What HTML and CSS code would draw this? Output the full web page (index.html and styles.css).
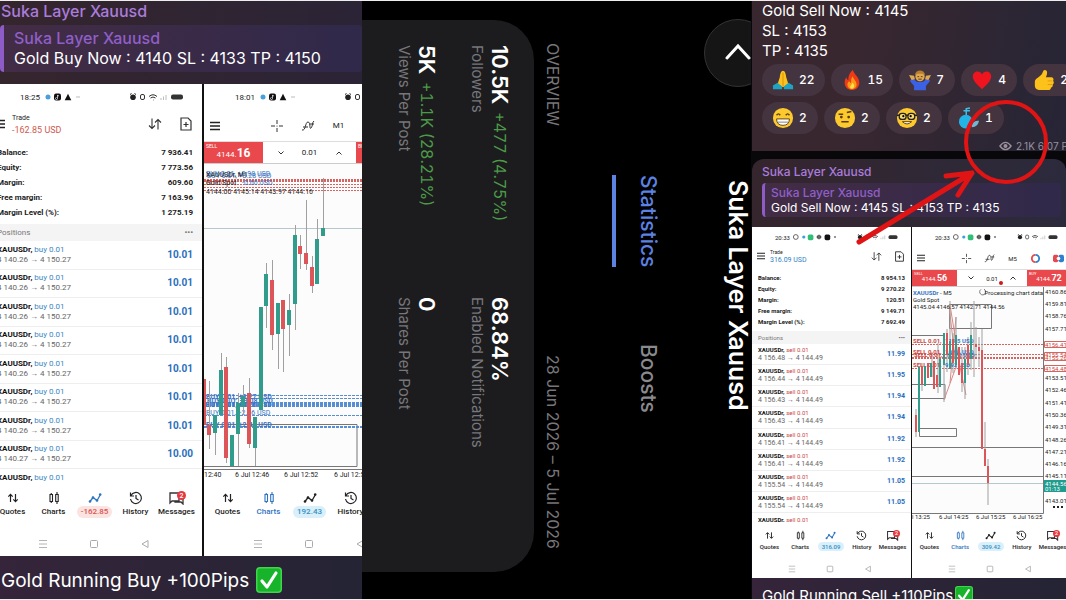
FILE: index.html
```html
<!DOCTYPE html>
<html lang="en">
<head>
    <meta charset="utf-8">
    <meta name="viewport" content="width=device-width, initial-scale=1">
    <title>Suka Layer Xauusd</title>
    <link rel="stylesheet" href="styles.css">
</head>
<body>
<svg class="defs" width="0" height="0" aria-hidden="true">
    <symbol id="menu" viewBox="0 0 10 10"><path d="M0 1.5h10M0 5h10M0 8.5h10" stroke="#222" stroke-width="1.4"/></symbol>
    <symbol id="sort" viewBox="0 0 14 14"><path d="M4 1.5v10M1 8.5l3 3 3-3M10 12.500v-10M7 5.500l3-3 3 3" fill="none" stroke="#333" stroke-width="1.100"/></symbol>
    <symbol id="newdoc" viewBox="0 0 12 14"><path d="M1 1h7l3 3v9H1zM6 5v5M3.500 7.500h5" fill="none" stroke="#333" stroke-width="1.200"/></symbol>
    <symbol id="cross" viewBox="0 0 14 14"><path d="M7 1v4M7 9v4M1 7h4M9 7h4" stroke="#333" stroke-width="1"/><circle cx="7" cy="7" r=".6" fill="#333"/></symbol>
    <symbol id="indi" viewBox="0 0 14 14"><path d="M1 11c4 1 3-8 6-8s1 8 3 6 1-6 3-7M2 8h5M9 5h4" fill="none" stroke="#333" stroke-width="1"/></symbol>
    <symbol id="down" viewBox="0 0 8 8"><path d="M1.500 2.500l2.500 2.500 2.500-2.500" fill="none" stroke="#333"/></symbol>
    <symbol id="up" viewBox="0 0 8 8"><path d="M1.500 5.500l2.500-2.500 2.500 2.500" fill="none" stroke="#333"/></symbol>
    <symbol id="t-quotes" viewBox="0 0 14 14"><path d="M4.500 11V3.500M2.300 5.600l2.200-2.200 2.200 2.200M9.500 3v7.500M7.300 8.400l2.200 2.200 2.200-2.200" fill="none" stroke="currentColor" stroke-width="1.200"/></symbol>
    <symbol id="t-charts" viewBox="0 0 14 14"><path d="M3 3.500h2.500v7H3zM8.700 3.500h2.500v7H8.700zM4.250 2v1.500M4.250 10.500v1.500M10 1v2.500M10 10.500v2.500" fill="none" stroke="currentColor" stroke-width="1.100"/></symbol>
    <symbol id="t-trade" viewBox="0 0 14 14"><path d="M2 10.500l3-4 4 3 3.500-6" fill="none" stroke="currentColor" stroke-width="1.300"/><g fill="currentColor"><circle cx="2" cy="10.500" r="1.300"/><circle cx="5" cy="6.500" r="1.300"/><circle cx="9" cy="9.500" r="1.300"/><circle cx="12.200" cy="3.500" r="1.300"/></g></symbol>
    <symbol id="t-history" viewBox="0 0 14 14"><path d="M2 4.500A5.500 5.500 0 1 1 1.500 8M1.500 1.500v3.500H5M7 4v3.500l2.500 1.500" fill="none" stroke="currentColor" stroke-width="1.200"/></symbol>
    <symbol id="t-msg" viewBox="0 0 18 14"><path d="M2 2h9v8H4l-2 2zM13 5h2v8l-2-2H7v-1" fill="none" stroke="#333" stroke-width="1.300"/><circle cx="13.500" cy="4.500" r="4.500" fill="#e5383f"/><text x="13.500" y="7" font-size="7" text-anchor="middle" fill="#fff" font-family="Roboto, sans-serif">2</text></symbol>
    <symbol id="n-menu" viewBox="0 0 10 10"><path d="M1 1.500h8M1 5h8M1 8.500h8" stroke="#b4b4b4" stroke-width="1"/></symbol>
    <symbol id="n-home" viewBox="0 0 10 10"><rect x="1.500" y="1.500" width="7" height="7" rx="1" fill="none" stroke="#aaa"/></symbol>
    <symbol id="n-back" viewBox="0 0 10 10"><path d="M8 1.500v7L2 5z" fill="none" stroke="#aaa"/></symbol>
    <symbol id="st-left" viewBox="0 0 38 10"><circle cx="5" cy="5" r="2.500" fill="#4aa0dc"/><rect x="11" y="1.500" width="7" height="7" rx="2" fill="#111"/><path d="M14.500 3v3.500a1 1 0 1 1-1-1M14.500 3.300l1.500.7" stroke="#fff" stroke-width=".7" fill="none"/><path d="M25 1.800l3.300 6.400h-6.600z" fill="#111"/><path d="M33 5h4" stroke="#bbb"/></symbol>
    <symbol id="st-left4" viewBox="0 0 60 10"><circle cx="6" cy="5" r="3" fill="none" stroke="#444"/><circle cx="16" cy="5" r="2" fill="#3aa0d8"/><rect x="21" y="2" width="7" height="7" rx="2" fill="#2fbf77"/><path d="M35 2v6M32 5h6M33 3.500h4v3h-4z" stroke="#333" fill="none"/><rect x="42" y="2" width="7" height="7" rx="2" fill="#111"/><circle cx="55" cy="5" r="1" fill="#111"/></symbol>
    <symbol id="st-right" viewBox="0 0 56 10"><circle cx="4" cy="5.200" r="2.800" fill="#222"/><path d="M1 2.500l1.500-1M7 2.500l-1.500-1" stroke="#222"/><rect x="11.500" y="2.500" width="4" height="5" rx="1.500" fill="none" stroke="#333"/><path d="M20 4.500q4-3.500 8 0M21.500 6q2.500-2 5 0M24 8h.5" fill="none" stroke="#333"/><path d="M32 8V6M34.500 8V4.500M37 8V3" stroke="#bbb"/><rect x="42" y="2.500" width="12" height="5" rx="2" fill="#333"/></symbol>
    <symbol id="check" viewBox="0 0 26 26"><rect width="26" height="26" rx="4" fill="#3fd64a"/><rect x="1.500" y="1.500" width="23" height="23" rx="3" fill="#17b32a"/><path d="M6 14l5 6L20 6" fill="none" stroke="#fff" stroke-width="3.200" stroke-linecap="round" stroke-linejoin="round"/></symbol>

    <symbol id="e-pray" viewBox="0 0 24 24"><path d="M12 2c-2 0-3 3-3.500 7L6 17l6 3 6-3-2.500-8C15 5 14 2 12 2z" fill="#fcc21b"/><path d="M12 4v15" stroke="#d98c0a"/><path d="M1 18l5-3 5 4v3H1zM23 18l-5-3-5 4v3h10z" fill="#1fa3c4"/></symbol>
    <symbol id="e-fire" viewBox="0 0 24 24"><path d="M13 1c1 5 7 7 7 14 0 5-4 8-8 8s-8-3-8-8c0-3 1-5 2-6 0 2 1 3 2 3 0-4 1-8 5-11z" fill="#ee3a17"/><path d="M13 8c0 3 4 5 4 9 0 3-2 5-5 5s-5-2-5-5c0-2 1-3 2-4 0 1 1 2 2 2 0-3 0-5 2-7z" fill="#fb9a16"/><path d="M12 15c2 1 3 3 2 5s-4 2-4 0 2-2 2-5z" fill="#ffe04a"/></symbol>
    <symbol id="e-shrug" viewBox="0 0 26 24"><path d="M6 24v-5l-5-6 4-3 4 4h8l4-4 4 3-5 6v5z" fill="#3b61e4"/><circle cx="13" cy="8" r="5.500" fill="#e0a850"/><path d="M7 6c1-7 11-7 12 0-3-2-9-2-12 0z" fill="#b9802c"/><path d="M0 6l6 1 1 4-4 1zM26 6l-6 1-1 4 4 1z" fill="#e0a850"/><path d="M10 8h2M14 8h2M11 11h4" stroke="#4b2c10"/></symbol>
    <symbol id="e-heart" viewBox="0 0 24 24"><path d="M12 22C5 16 2 12 2 8c0-6 8-7 10-2 2-5 10-4 10 2 0 4-3 8-10 14z" fill="#f0141e"/></symbol>
    <symbol id="e-thumb" viewBox="0 0 24 24"><path d="M13 1c3 0 3 4 1 8h6c2 0 3 2 2 4 1 1 1 3-.5 4 .5 2-.5 3-2 3.500 0 1.500-1 2.500-3 2.500H9c-4 0-7-1-7-5v-4c0-4 6-5 8-9 1-2 1-4 3-4z" fill="#fcc21b"/><path d="M16 13h5M16 17h5" stroke="#e0960f"/></symbol>
    <symbol id="e-grin" viewBox="0 0 24 24"><circle cx="12" cy="12" r="11" fill="#fcc92f"/><path d="M5 9q2-3 4 0M15 9q2-3 4 0" fill="none" stroke="#5a3a10" stroke-width="1.500"/><path d="M5 13h14q0 7-7 7t-7-7z" fill="#fff" stroke="#5a3a10"/><path d="M6 16.500h12" stroke="#777"/></symbol>
    <symbol id="e-brow" viewBox="0 0 24 24"><circle cx="12" cy="12" r="11" fill="#fcc92f"/><path d="M5 8h5M14 6l5-1M8 16h8" stroke="#5a3a10" stroke-width="1.600"/><circle cx="8" cy="11" r="1.500" fill="#5a3a10"/><circle cx="16" cy="11" r="1.500" fill="#5a3a10"/></symbol>
    <symbol id="e-nerd" viewBox="0 0 24 24"><circle cx="12" cy="12" r="11" fill="#fcc92f"/><g fill="#fcdc70" stroke="#222" stroke-width="1.400"><rect x="3.500" y="7" width="7.500" height="6.500" rx="3"/><rect x="13" y="7" width="7.500" height="6.500" rx="3"/></g><circle cx="8" cy="10" r="1.200"/><circle cx="16" cy="10" r="1.200"/><path d="M1 9h3M20 9h3M11 9h2" stroke="#222" stroke-width="1.500"/><path d="M7 16q5 5 10 0z" fill="#fff" stroke="#5a3a10"/></symbol>
    <symbol id="e-bottle" viewBox="0 0 24 24"><path d="M9 1v9M6 4h7M9 2l4-1" stroke="#3ec0ea" stroke-width="1.600"/><circle cx="8.500" cy="16" r="7.500" fill="#22b4e6"/><path d="M15 22c0-5 3-7 8-7-1 4-3 7-8 7z" fill="#6fb8d4"/></symbol>
</svg>

<main class="collage">

    <!-- buy signal -->
    <section class="chat">
        <header class="message">
            <div class="sender">Suka Layer Xauusd</div>
            <blockquote class="quote">
                <div class="quote-name">Suka Layer Xauusd</div>
                <div>Gold Buy Now : 4140 SL : 4133 TP : 4150</div>
            </blockquote>
        </header>
        <div class="photos">
            <div class="phone"><div class="screen cropped">
                <div class="status"><span>18:25</span><svg class="st-left"><use href="#st-left"/></svg><svg class="st-right"><use href="#st-right"/></svg></div>
                <div class="head">
                    <svg class="menu"><use href="#menu"/></svg>
                    <div class="account-name"><small>Trade</small><b class="loss">-162.85 USD</b></div>
                    <svg class="icon"><use href="#sort"/></svg><svg class="icon"><use href="#newdoc"/></svg>
                </div>
                <dl class="account">
                    <div><dt>Balance:</dt><dd>7 936.41</dd></div>
                    <div><dt>Equity:</dt><dd>7 773.56</dd></div>
                    <div><dt>Margin:</dt><dd>609.60</dd></div>
                    <div><dt>Free margin:</dt><dd>7 163.96</dd></div>
                    <div><dt>Margin Level (%):</dt><dd>1 275.19</dd></div>
                </dl>
                <div class="positions-head"><span>Positions</span><b>•••</b></div>
                <ul class="positions buy">
                    <li><p><b>XAUUSDr,</b> <i>buy 0.01</i><br>4 140.26 → 4 150.27</p><strong>10.01</strong></li>
                    <li><p><b>XAUUSDr,</b> <i>buy 0.01</i><br>4 140.26 → 4 150.27</p><strong>10.01</strong></li>
                    <li><p><b>XAUUSDr,</b> <i>buy 0.01</i><br>4 140.26 → 4 150.27</p><strong>10.01</strong></li>
                    <li><p><b>XAUUSDr,</b> <i>buy 0.01</i><br>4 140.26 → 4 150.27</p><strong>10.01</strong></li>
                    <li><p><b>XAUUSDr,</b> <i>buy 0.01</i><br>4 140.26 → 4 150.27</p><strong>10.01</strong></li>
                    <li><p><b>XAUUSDr,</b> <i>buy 0.01</i><br>4 140.26 → 4 150.27</p><strong>10.01</strong></li>
                    <li><p><b>XAUUSDr,</b> <i>buy 0.01</i><br>4 140.26 → 4 150.27</p><strong>10.01</strong></li>
                    <li><p><b>XAUUSDr,</b> <i>buy 0.01</i><br>4 140.27 → 4 150.27</p><strong>10.00</strong></li>
                    <li><p><b>XAUUSDr,</b> <i>buy 0.01</i></p></li>
                </ul>
                <nav class="tabs">
                    <a><svg><use href="#t-quotes"/></svg>Quotes</a>
                    <a><svg><use href="#t-charts"/></svg>Charts</a>
                    <a class="active"><svg><use href="#t-trade"/></svg><span class="pill red">-162.85</span></a>
                    <a><svg><use href="#t-history"/></svg>History</a>
                    <a><svg class="wide"><use href="#t-msg"/></svg>Messages</a>
                </nav>
                <div class="navbar"><svg><use href="#n-menu"/></svg><svg><use href="#n-home"/></svg><svg><use href="#n-back"/></svg></div>
            </div></div>

            <div class="phone"><div class="screen">
                <div class="status"><span>18:01</span><svg class="st-left"><use href="#st-left"/></svg><svg class="st-right"><use href="#st-right"/></svg></div>
                <div class="head toolbar">
                    <svg class="menu"><use href="#menu"/></svg>
                    <span><svg class="icon"><use href="#cross"/></svg></span>
                    <span><svg class="icon"><use href="#indi"/></svg></span>
                    <span>M1</span>
                </div>
                <div class="order">
                    <button class="deal"><small>SELL</small>4144.<b>16</b></button>
                    <div class="volume"><button aria-label="Less"><svg><use href="#down"/></svg></button><input aria-label="Volume" value="0.01"><button aria-label="More"><svg><use href="#up"/></svg></button></div>
                    <button class="deal"><small>BUY</small>4144.<b>32</b></button>
                </div>
                <svg class="chart" viewBox="0 0 213 317">
                    <rect width="213" height="305" fill="#fcfcfc"/>
                    <path class="axis" d="M0 260.500h153v42H0M0 305.500h213"/>
                    <path class="level" d="M0 64.500h213"/>
                    <g class="deals-red"><path d="M0 15.500h213M0 20.500h213M0 23.500h213M0 26.500h213"/><path d="M0 17h213" stroke-width="2"/></g>
                    <g class="deals-blue"><path d="M0 231.500h213M0 234.500h213M0 251.500h213"/><path d="M0 240.500h213" stroke-width="5"/><path d="M0 263h213" stroke-width="2"/></g>
                    <g class="t-blue">
                        <text x="2" y="12">BUY 0.01, +0.98 USD</text><text x="3" y="14">BUY 0.01, +3.28 USD</text><text x="2" y="21" class="t-red">BUY 0.01,</text><text x="38" y="21">-0.60 USD</text>
                        <g class="bold"><text x="2" y="235">BUY 0.01, +3.27 USD</text><text x="3" y="239">BUY 0.01, +3.08 USD</text><text x="2" y="243">BUY 0.01, +3.26 USD</text></g>
                        <text x="2" y="251">BUY 0.01, +2.66 USD</text><text x="2" y="263" class="bold">BUY 0.01, +2.48 USD</text>
                    </g>
                    <path class="wick" d="M5.500 217v68M11.500 251v40M17.500 189v62M22.500 193v106M34.500 229v73M39.500 221v30M45.500 214v70M51.500 253v49M62.500 99v65M68.500 96v90M74.500 139v66M79.500 136v72M85.500 130v62M91.500 61v105M96.500 71v34M102.500 36v70M108.500 92v37M113.500 55v65M119.500 14v58"/>
                    <path class="rise" d="M11 251v18M17 206v45M28 271v31M34 239v31M39 232v11M51 253v31M57 143v103M62 110v32M74 139v31M85 146v15M91 71v69M113 75v45M119 64v8"/>
                    <path class="fall" d="M0 215v46M5 261v10M22 203v91M45 229v51M68 116v55M79 136v29M96 82v8M102 89v11M108 103v19"/>
                    <text x="2" y="13">XAUUSDr, M1</text><text x="2" y="21">Gold Spot</text><text x="2" y="30">4144.00 4145.14 4143.97 4144.16</text>
                    <text x="0" y="313">12:40</text><text x="31" y="313">6 Jul 12:46</text><text x="80" y="313">6 Jul 12:52</text><text x="130" y="313">6 Jul 12:58</text>
                </svg>
                <nav class="tabs">
                    <a><svg><use href="#t-quotes"/></svg>Quotes</a>
                    <a class="active"><svg><use href="#t-charts"/></svg>Charts</a>
                    <a><svg><use href="#t-trade"/></svg><span class="pill">192.43</span></a>
                    <a><svg><use href="#t-history"/></svg>History</a>
                    <a><svg class="wide"><use href="#t-msg"/></svg>Messages</a>
                </nav>
                <div class="navbar"><svg><use href="#n-menu"/></svg><svg><use href="#n-home"/></svg><svg><use href="#n-back"/></svg></div>
            </div></div>
        </div>
        <footer class="caption">Gold Running Buy +100Pips<svg><use href="#check"/></svg></footer>
    </section>

    <!-- channel statistics, turned sideways -->
    <section class="stats">
        <header class="stats-head">
            <button class="back" aria-label="Back"><svg viewBox="0 0 30 30"><path d="M4 20L15 8l11 12" fill="none" stroke="#fff" stroke-width="3" stroke-linecap="round"/></svg></button>
            <h1>Suka Layer Xauusd</h1>
        </header>
        <nav class="stats-tabs"><a class="active">Statistics</a><a>Boosts</a></nav>
        <div class="period"><span>OVERVIEW</span><span>28 Jun 2026 – 5 Jul 2026</span></div>
        <div class="card">
            <div><b>10.5K</b><em>+477 (4.75%)</em><p>Followers</p></div>
            <div><b>68.84%</b><p>Enabled Notifications</p></div>
            <div><b>5K</b><em>+1.1K (28.21%)</em><p>Views Per Post</p></div>
            <div><b>0</b><p>Shares Per Post</p></div>
        </div>
    </section>

    <!-- sell signal -->
    <section class="chat small">
        <div class="signal">
            <p>Gold Sell Now : 4145<br>SL : 4153<br>TP : 4135</p>
            <div class="reactions">
                <button><svg><use href="#e-pray"/></svg>22</button>
                <button><svg><use href="#e-fire"/></svg>15</button>
                <button><svg><use href="#e-shrug"/></svg>7</button>
                <button><svg><use href="#e-heart"/></svg>4</button>
                <button><svg><use href="#e-thumb"/></svg>2</button>
            </div>
            <div class="reactions">
                <button><svg><use href="#e-grin"/></svg>2</button>
                <button><svg><use href="#e-brow"/></svg>2</button>
                <button><svg><use href="#e-nerd"/></svg>2</button>
                <button><svg><use href="#e-bottle"/></svg>1</button>
            </div>
            <div class="views"><svg viewBox="0 0 14 10"><path d="M1 5q6-8 12 0-6 8-12 0z" fill="none" stroke="#9a919c" stroke-width="1.400"/><circle cx="7" cy="5" r="2.200" fill="#9a919c"/></svg>2.1K 6:07 PM</div>
        </div>
        <div class="bubble">
            <header class="message">
                <div class="sender">Suka Layer Xauusd</div>
                <blockquote class="quote">
                    <div class="quote-name">Suka Layer Xauusd</div>
                    <div>Gold Sell Now : 4145 SL : 4153 TP : 4135</div>
                </blockquote>
            </header>
            <div class="photos">
                <div class="phone"><div class="screen">
                    <div class="status"><span>20:33</span><svg class="st-left"><use href="#st-left4"/></svg><svg class="st-right"><use href="#st-right"/></svg></div>
                    <div class="head">
                        <svg class="menu"><use href="#menu"/></svg>
                        <div class="account-name"><small>Trade</small><b>316.09 USD</b></div>
                        <svg class="icon"><use href="#sort"/></svg><svg class="icon"><use href="#newdoc"/></svg>
                    </div>
                    <dl class="account">
                        <div><dt>Balance:</dt><dd>8 954.13</dd></div>
                        <div><dt>Equity:</dt><dd>9 270.22</dd></div>
                        <div><dt>Margin:</dt><dd>120.51</dd></div>
                        <div><dt>Free margin:</dt><dd>9 149.71</dd></div>
                        <div><dt>Margin Level (%):</dt><dd>7 692.49</dd></div>
                    </dl>
                    <div class="positions-head"><span>Positions</span><b>•••</b></div>
                    <ul class="positions sell">
                        <li><p><b>XAUUSDr,</b> <i>sell 0.01</i><br>4 156.48 → 4 144.49</p><strong>11.99</strong></li>
                        <li><p><b>XAUUSDr,</b> <i>sell 0.01</i><br>4 156.44 → 4 144.49</p><strong>11.95</strong></li>
                        <li><p><b>XAUUSDr,</b> <i>sell 0.01</i><br>4 156.43 → 4 144.49</p><strong>11.94</strong></li>
                        <li><p><b>XAUUSDr,</b> <i>sell 0.01</i><br>4 156.43 → 4 144.49</p><strong>11.94</strong></li>
                        <li><p><b>XAUUSDr,</b> <i>sell 0.01</i><br>4 156.41 → 4 144.49</p><strong>11.92</strong></li>
                        <li><p><b>XAUUSDr,</b> <i>sell 0.01</i><br>4 156.41 → 4 144.49</p><strong>11.92</strong></li>
                        <li><p><b>XAUUSDr,</b> <i>sell 0.01</i><br>4 155.54 → 4 144.49</p><strong>11.05</strong></li>
                        <li><p><b>XAUUSDr,</b> <i>sell 0.01</i><br>4 155.54 → 4 144.49</p><strong>11.05</strong></li>
                        <li><p><b>XAUUSDr,</b> <i>sell 0.01</i></p></li>
                    </ul>
                    <nav class="tabs">
                        <a><svg><use href="#t-quotes"/></svg>Quotes</a>
                        <a><svg><use href="#t-charts"/></svg>Charts</a>
                        <a class="active"><svg><use href="#t-trade"/></svg><span class="pill">316.09</span></a>
                        <a><svg><use href="#t-history"/></svg>History</a>
                        <a><svg class="wide"><use href="#t-msg"/></svg>Messages</a>
                    </nav>
                    <div class="navbar"><svg><use href="#n-menu"/></svg><svg><use href="#n-home"/></svg><svg><use href="#n-back"/></svg></div>
                </div></div>

                <div class="phone"><div class="screen">
                    <div class="status"><span>20:33</span><svg class="st-left"><use href="#st-left4"/></svg><svg class="st-right"><use href="#st-right"/></svg></div>
                    <div class="head toolbar">
                        <svg class="menu"><use href="#menu"/></svg>
                        <span><svg class="icon"><use href="#cross"/></svg></span>
                        <span><svg class="icon"><use href="#indi"/></svg></span>
                        <span>M5</span>
                        <span><svg class="icon" viewBox="0 0 12 12"><path d="M6 2a4 4 0 0 0 0 8" fill="none" stroke="#e5484d" stroke-width="2"/><path d="M6 2a4 4 0 0 1 0 8" fill="none" stroke="#2f7fd0" stroke-width="2"/></svg></span>
                        <span><svg class="icon" viewBox="0 0 12 12"><rect y="2" width="6" height="8" rx="2" fill="#e5484d"/><rect x="6" y="2" width="6" height="8" rx="2" fill="#2f7fd0"/><circle cx="6" cy="6" r="2" fill="#fff"/></svg></span>
                    </div>
                    <div class="order">
                        <button class="deal"><small>SELL</small>4144.<b>56</b></button>
                        <div class="volume"><button aria-label="Less"><svg><use href="#down"/></svg></button><input aria-label="Volume" value="0.01"><button aria-label="More"><svg><use href="#up"/></svg></button></div>
                        <button class="deal"><small>BUY</small>4144.<b>72</b></button>
                    </div>
                    <svg class="chart" viewBox="0 0 159 235">
                        <rect width="131" height="226" fill="#fcfcfc"/>
                        <path class="axis" d="M37.500 17.500h42v24h-42zM0 48.500h32M0 97.500h33v14H0M7.500 141.500h37v8h-37zM0 160.500h131M0 226.500h131.500V0M0 189.500h131"/>
                        <path class="level" d="M0 196.500h131"/>
                        <g class="deals-red"><path d="M0 57.500h131M0 67.500h131M0 81.500h131"/><path d="M0 71h131" stroke-width="2"/></g>
                        <path class="trend" d="M32 113L44 80 37 18M38 18l10 62 6 28M44 30l-6 66"/>
                        <path class="wick" d="M4 122v28M10 76v28M20 65v25M26 56v50M32 50v65M35 42v43M38 14v62M41 46v40M44 30v52M50 60v45M53 60v52M56 50v38M59 35v48M62 14v76M64 40v30M67 50v30M70 42v120M73 135v44M76 172v46"/>
                        <g class="bold"><g class="t-red"><text x="1" y="56">SELL 0.01,</text><text x="1" y="67">SELL 0.01,</text><text x="2" y="70">SELL 0.01,</text><text x="1" y="80">SELL 0.01,</text></g>
                        <g class="t-blue"><text x="33" y="56">11.85 USD</text><text x="33" y="67">10.98 USD</text><text x="34" y="70">10.70 USD</text><text x="33" y="80">9.92 USD</text></g></g>
                        <path class="rise thin" d="M7 80v65M13 79v20M19 76v14M28 72v28M32 46v32M38 54v28M44 48v30M53 72v24M59 48v24"/>
                        <path class="fall thin" d="M4 128v17M10 80v18M16 76v15M22 74v28M25 88v12M35 46v22M41 52v24M47 60v28M50 76v20M56 58v20M64 57v3M67 60v4M70 63v99M73 162v17M76 179v17"/>
                        <text x="1" y="8"><tspan class="t-blue bold">XAUUSDr</tspan> - M5</text><text x="1" y="15">Gold Spot</text><text x="1" y="22">4145.04 4146.57 4142.71 4144.56</text>
                        <path class="spinner" d="M72 2.200a3 3 0 1 1-3 .2"/><text x="131" y="8" text-anchor="end">Processing chart data</text>
                        <g>
                            <text x="133" y="7">4160.86</text><text x="133" y="19">4159.81</text><text x="133" y="31">4158.76</text><text x="133" y="44">4157.71</text>
                            <text x="133" y="93">4153.51</text><text x="133" y="105">4152.46</text><text x="133" y="118">4151.41</text><text x="133" y="130">4150.36</text><text x="133" y="142">4149.31</text><text x="133" y="155">4148.26</text><text x="133" y="167">4147.21</text><text x="133" y="179">4146.16</text><text x="133" y="191">4145.11</text><text x="133" y="216">4143.01</text>
                        </g>
                        <g class="tags"><path d="M132.500 54.500h30v6h-30zM132.500 65.500h30v8h-30zM132.500 78.500h30v6h-30z"/></g>
                        <g class="t-red"><text x="133" y="60">4156.41</text><text x="133" y="70">4155.54</text><text x="133" y="73">4155.26</text><text x="133" y="84">4154.48</text></g>
                        <rect x="132" y="193" width="28" height="12" fill="#1f9d8f"/><text x="133" y="199" fill="#fff">4144.56</text><text x="133" y="204" fill="#fff">01:13</text>
                        <path class="more" d="M141 220h2M145 220h2M149 220h2"/>
                        <text x="0" y="232">l 13:25</text><text x="27" y="232">6 Jul 14:25</text><text x="64" y="232">6 Jul 15:25</text><text x="101" y="232">6 Jul 16:25</text>
                    </svg>
                    <nav class="tabs">
                        <a><svg><use href="#t-quotes"/></svg>Quotes</a>
                        <a class="active"><svg><use href="#t-charts"/></svg>Charts</a>
                        <a><svg><use href="#t-trade"/></svg><span class="pill">309.42</span></a>
                        <a><svg><use href="#t-history"/></svg>History</a>
                        <a><svg class="wide"><use href="#t-msg"/></svg>Messages</a>
                    </nav>
                    <div class="navbar"><svg><use href="#n-menu"/></svg><svg><use href="#n-home"/></svg><svg><use href="#n-back"/></svg></div>
                </div></div>
            </div>
            <footer class="caption">Gold Running Sell +110Pips<svg><use href="#check"/></svg></footer>
        </div>
        <!-- hand-drawn arrow and ring over the view counter -->
        <svg class="marker" viewBox="0 0 315 300" width="315" height="300">
            <g fill="none" stroke="#e01414" stroke-width="4" stroke-linecap="round" stroke-linejoin="round">
                <circle cx="255" cy="142" r="40"/>
                <path d="M108 242L221 173M195 176l26-3-14 22" stroke-width="5"/>
            </g>
            <circle cx="250" cy="283" r="2" fill="#d01818"/>
        </svg>
    </section>
</main>
</body>
</html>
```
FILE: styles.css
```css
* {
    box-sizing: border-box;
}
body {
    margin: 0;
    background: #000;
    color: #fff;
    font-family: Inter, "Liberation Sans", sans-serif;
}
p, h1, dl, dd, ul, blockquote {
    margin: 0;
    padding: 0;
}
button {
    font: inherit;
    color: inherit;
    border: none;
    background: none;
    padding: 0;
}
svg {
    display: block;
    flex: none;
}
.defs {
    position: absolute;
}
.collage {
    display: grid;
    grid-template-columns: 362fr 389fr 315fr;
    height: 100vh;
    overflow: hidden;
    border-top: 1px solid #eee;
    border-bottom: 1px solid #eee;
}

/* chat messages */
.chat {
    position: relative;
    min-width: 0;
    overflow: hidden;
    background: linear-gradient(90deg, #35252d, #2b2436);
}
.message {
    height: 83px;
    font-size: 16px;
    line-height: 20px;
    white-space: nowrap;
}
.sender {
    padding: 0 1px 4px;
    font-weight: 500;
    color: #aa7cdc;
}
.quote {
    padding: 3px 10px 4px;
    border-left: 4px solid #8d5cc6;
    border-radius: 4px;
    background: linear-gradient(90deg, #432c45, #30294a);
}
.quote-name {
    font-weight: 500;
    color: #8f5fc8;
}
.photos {
    display: grid;
    grid-template-columns: 202px 1fr;
    gap: 2px;
    background: #111;
}
.caption {
    display: flex;
    align-items: center;
    gap: 7px;
    height: 48px;
    padding-left: 1px;
    font-size: 19px;
    white-space: nowrap;
    background: linear-gradient(90deg, #35243a, #242434);
}
.caption svg {
    width: 26px;
    height: 26px;
}

/* trading app screens */
.phone {
    min-width: 0;
    overflow: hidden;
    background: #fff;
    color: #222;
    font-family: Roboto, "Liberation Sans", sans-serif;
    font-size: 8px;
}
.screen {
    width: 213px;
}
.cropped {
    margin-left: -11px;
}
.status {
    display: flex;
    align-items: center;
    height: 26px;
    padding: 0 17px 0 31px;
}
.st-left {
    width: 38px;
    height: 10px;
    margin-left: 3px;
}
.st-right {
    width: 56px;
    height: 10px;
    margin-left: auto;
}
.head {
    display: flex;
    align-items: center;
    height: 28px;
    padding: 0 9px 0 6px;
}
.menu {
    width: 10px;
    height: 10px;
}
.icon {
    width: 14px;
    height: 14px;
    margin-left: 17px;
}
.account-name {
    margin: 0 auto 0 7px;
}
.account-name small {
    display: block;
    font-size: 7px;
    line-height: 11px;
}
.account-name b {
    display: block;
    font-size: 9px;
    line-height: 12px;
    font-weight: 400;
    color: #2f7fc4;
}
.account-name .loss {
    color: #cf5a50;
}
.account {
    padding: 7px 9px 4px 8px;
    font-weight: 700;
}
.account div {
    display: flex;
    justify-content: space-between;
    line-height: 15px;
}
.positions-head {
    display: flex;
    justify-content: space-between;
    padding: 0 9px 0 8px;
    line-height: 17px;
    color: #777;
    background: #f4f4f4;
}
.positions {
    display: grid;
    grid-template-rows: repeat(8, 1fr) 12px;
    height: 240px;
    overflow: hidden;
    list-style: none;
    line-height: 10px;
}
.positions li {
    display: flex;
    align-items: center;
    justify-content: space-between;
    min-height: 0;
    padding: 0 9px 0 8px;
    border-bottom: 1px solid #eee;
    overflow: hidden;
    color: #666;
}
.positions li:last-child {
    align-items: flex-start;
    padding-top: 4px;
    border: none;
}
.positions b {
    color: #111;
}
.positions i {
    font-style: normal;
    color: #3a86c4;
}
.positions.sell i {
    color: #cc4444;
}
.positions strong {
    font-size: 10px;
    color: #2a6fbd;
}
.tabs {
    display: grid;
    grid-template-columns: repeat(5, 1fr);
    height: 51px;
    padding: 10px 5px 0 3px;
    font-weight: 500;
    line-height: 12px;
}
.tabs a {
    display: flex;
    flex-direction: column;
    align-items: center;
    gap: 1px;
    min-width: 0;
}
.tabs svg {
    width: 14px;
    height: 14px;
}
.tabs .wide {
    width: 18px;
}
.tabs .active {
    color: #2f74c0;
}
.pill {
    padding: 0 4px;
    border-radius: 6px;
    background: #d9effa;
    color: #3490c4;
}
.pill.red {
    background: #fbe3e1;
    color: #d9534f;
}
.navbar {
    display: flex;
    align-items: center;
    justify-content: center;
    gap: 41px;
    height: 24px;
    padding-right: 3px;
}
.navbar svg {
    width: 10px;
    height: 10px;
}
.toolbar {
    height: 31px;
    padding-right: 0;
}
.toolbar .menu {
    margin-right: 41px;
}
.toolbar span {
    display: flex;
    justify-content: center;
    width: 31px;
}
.toolbar .icon {
    margin: 0;
}
.order {
    display: grid;
    grid-template-columns: 59px 93px 1fr;
    height: 23px;
    border-top: 1px solid #ddd;
    border-bottom: 1px solid #ccc;
}
.deal {
    position: relative;
    background: #e9484d;
    color: #fff;
}
.deal small {
    position: absolute;
    top: 1px;
    left: 2px;
    font-size: 5px;
    line-height: 6px;
}
.deal b {
    font-size: 12px;
}
.volume {
    display: grid;
    grid-template-columns: 1fr 1fr 1fr;
    align-items: center;
    justify-items: center;
    padding: 0 3px;
}
.volume svg {
    width: 8px;
    height: 8px;
}
.volume input {
    width: 100%;
    padding: 0;
    border: none;
    background: none;
    font: inherit;
    color: inherit;
    text-align: center;
}

/* charts */
.chart {
    width: 100%;
    font-size: 7px;
    fill: #222;
}
.chart path {
    fill: none;
}
.axis {
    stroke: #777;
}
.level {
    stroke: #b5c8cc;
}
.deals-red {
    stroke: #d4645f;
    stroke-dasharray: 2 1;
}
.deals-blue {
    stroke: #5a8ed2;
    stroke-dasharray: 3 1;
}
.wick {
    stroke: #a0a0a0;
}
.rise {
    stroke: #2f9c8c;
    stroke-width: 4;
}
.fall {
    stroke: #dc5558;
    stroke-width: 4;
}
.thin {
    stroke-width: 2;
}
.trend {
    stroke: #d98a86;
}
.tags {
    stroke: #d4645f;
}
.spinner {
    stroke: #777;
}
.more {
    stroke: #222;
    stroke-width: 2;
}
.t-blue {
    fill: #3a74c4;
}
.t-red {
    fill: #cc4a46;
}
.bold {
    font-weight: 700;
}

/* sideways statistics page */
.stats {
    writing-mode: vertical-rl;
    min-width: 0;
    overflow: hidden;
    background: #000;
    color: #8a8a8e;
    font-size: 15px;
    white-space: nowrap;
}
.stats-head {
    display: flex;
    align-items: center;
    gap: 93px;
    block-size: 26px;
    padding-inline-start: 18px;
}
.back {
    display: flex;
    flex: none;
    align-items: center;
    justify-content: center;
    width: 68px;
    height: 68px;
    border: 1px solid #333;
    border-radius: 50%;
    background: #151516;
}
.back svg {
    width: 30px;
    height: 30px;
}
.stats-head h1 {
    font-size: 25px;
    line-height: 26px;
    font-weight: 600;
    color: #fff;
}
.stats-tabs {
    display: flex;
    gap: 77px;
    margin-block-start: 65px;
    padding-inline-start: 174px;
    font-size: 21px;
    line-height: 24px;
    font-weight: 500;
}
.stats-tabs a {
    padding-block-end: 20px;
    border-block-end: 4px solid transparent;
}
.stats-tabs .active {
    color: #5c82e2;
    border-color: #5c82e2;
}
.period {
    display: flex;
    justify-content: space-between;
    margin-block-start: 49px;
    padding-inline: 42px 50px;
    font-size: 16px;
    line-height: 20px;
    color: #77777b;
}
.card {
    display: grid;
    grid-template-columns: 252px 1fr;
    gap: 27px 0;
    align-content: start;
    block-size: 172px;
    margin-block-start: 9px;
    margin-inline: 19px 27px;
    padding: 25px 21px 0 27px;
    border-radius: 0 40px 40px 0;
    background: #1c1c1e;
}
.card b {
    font-size: 22px;
    line-height: 26px;
    font-weight: 600;
    color: #fff;
}
.card em {
    margin-inline-start: 8px;
    font-size: 16px;
    font-style: normal;
    font-variant-numeric: tabular-nums;
    color: #4c9a48;
}
.card p {
    line-height: 20px;
    color: #77777b;
}

/* right column is the same chat drawn at a smaller size */
.small {
    background: #08070a;
    padding-left: 1px;
}
.signal {
    height: 150px;
    padding: 0 0 0 10px;
    overflow: hidden;
    font-size: 15px;
    line-height: 20px;
    background: linear-gradient(100deg, #39272f 30%, #262536);
}
.signal p {
    padding-bottom: 3px;
}
.reactions {
    display: flex;
    gap: 6px;
    margin-bottom: 6px;
}
.reactions button {
    display: flex;
    flex: none;
    align-items: center;
    gap: 5px;
    min-width: 56px;
    height: 32px;
    padding: 0 10px;
    border-radius: 16px;
    background: #44343f;
    font-size: 12px;
    font-weight: 500;
    font-variant-numeric: tabular-nums;
}
.reactions svg {
    width: 22px;
    height: 22px;
}
.views {
    display: flex;
    align-items: center;
    gap: 4px;
    margin-left: 237px;
    font-size: 10px;
    line-height: 12px;
    white-space: nowrap;
    color: #9a919c;
}
.views svg {
    width: 13px;
    height: 10px;
}
.bubble {
    margin-top: 8px;
    border-radius: 12px 12px 0 0;
    overflow: hidden;
    background: linear-gradient(90deg, #35252d, #2b2a3c);
}
.small .message {
    height: 68px;
    padding: 5px 5px 0 10px;
    font-size: 12px;
    line-height: 15px;
}
.small .sender {
    padding: 0 0 4px;
}
.small .quote {
    padding: 2px 6px;
    border-left-width: 3px;
}
.small .photos {
    grid-template-columns: 159px 1fr;
    gap: 1px;
}
.small .caption {
    gap: 2px;
    height: 34px;
    padding-left: 10px;
    font-size: 15px;
}
.small .caption svg {
    width: 18px;
    height: 18px;
}
.small .phone {
    font-size: 6px;
}
.small .screen {
    width: 159px;
}
.small .status {
    height: 20px;
    padding: 0 12px 0 23px;
}
.small .st-left {
    width: 48px;
    height: 8px;
    margin-left: 1px;
}
.small .st-right {
    width: 42px;
    height: 8px;
}
.small .head {
    height: 18px;
    padding: 0 6px 0 5px;
}
.small .menu {
    width: 8px;
    height: 8px;
}
.small .icon {
    width: 11px;
    height: 11px;
    margin-left: 12px;
}
.small .account-name {
    margin-left: 5px;
}
.small .account-name small {
    font-size: 5px;
    line-height: 8px;
}
.small .account-name b {
    font-size: 7px;
    line-height: 9px;
}
.small .account {
    padding: 7px 6px 4px;
}
.small .account div {
    line-height: 11px;
}
.small .positions-head {
    padding: 0 6px;
    line-height: 13px;
}
.small .positions {
    grid-template-rows: repeat(8, 1fr) 9px;
    height: 178px;
    line-height: 8px;
}
.small .positions li {
    padding: 0 6px;
}
.small .positions li:last-child {
    padding-top: 3px;
}
.small .positions p {
    font-size: 7px;
}
.small .positions b,
.small .positions i {
    font-size: 6px;
}
.small .positions strong {
    font-size: 7px;
}
.small .tabs {
    height: 38px;
    padding: 8px 3px 0 2px;
    line-height: 9px;
}
.small .tabs svg {
    width: 11px;
    height: 11px;
}
.small .tabs .wide {
    width: 14px;
}
.small .navbar {
    gap: 30px;
    height: 18px;
}
.small .navbar svg {
    width: 8px;
    height: 8px;
}
.small .toolbar {
    height: 22px;
    padding-right: 0;
}
.small .toolbar .menu {
    margin-right: 30px;
}
.small .toolbar .icon {
    margin: 0;
}
.small .toolbar span {
    width: 23px;
}
.small .order {
    grid-template-columns: 45px 70px 1fr;
    height: 18px;
}
.small .deal small {
    font-size: 4px;
    line-height: 5px;
}
.small .deal b {
    font-size: 9px;
}
.small .chart {
    font-size: 6px;
}
.marker {
    position: absolute;
    top: -1px;
    left: 0;
}
```
